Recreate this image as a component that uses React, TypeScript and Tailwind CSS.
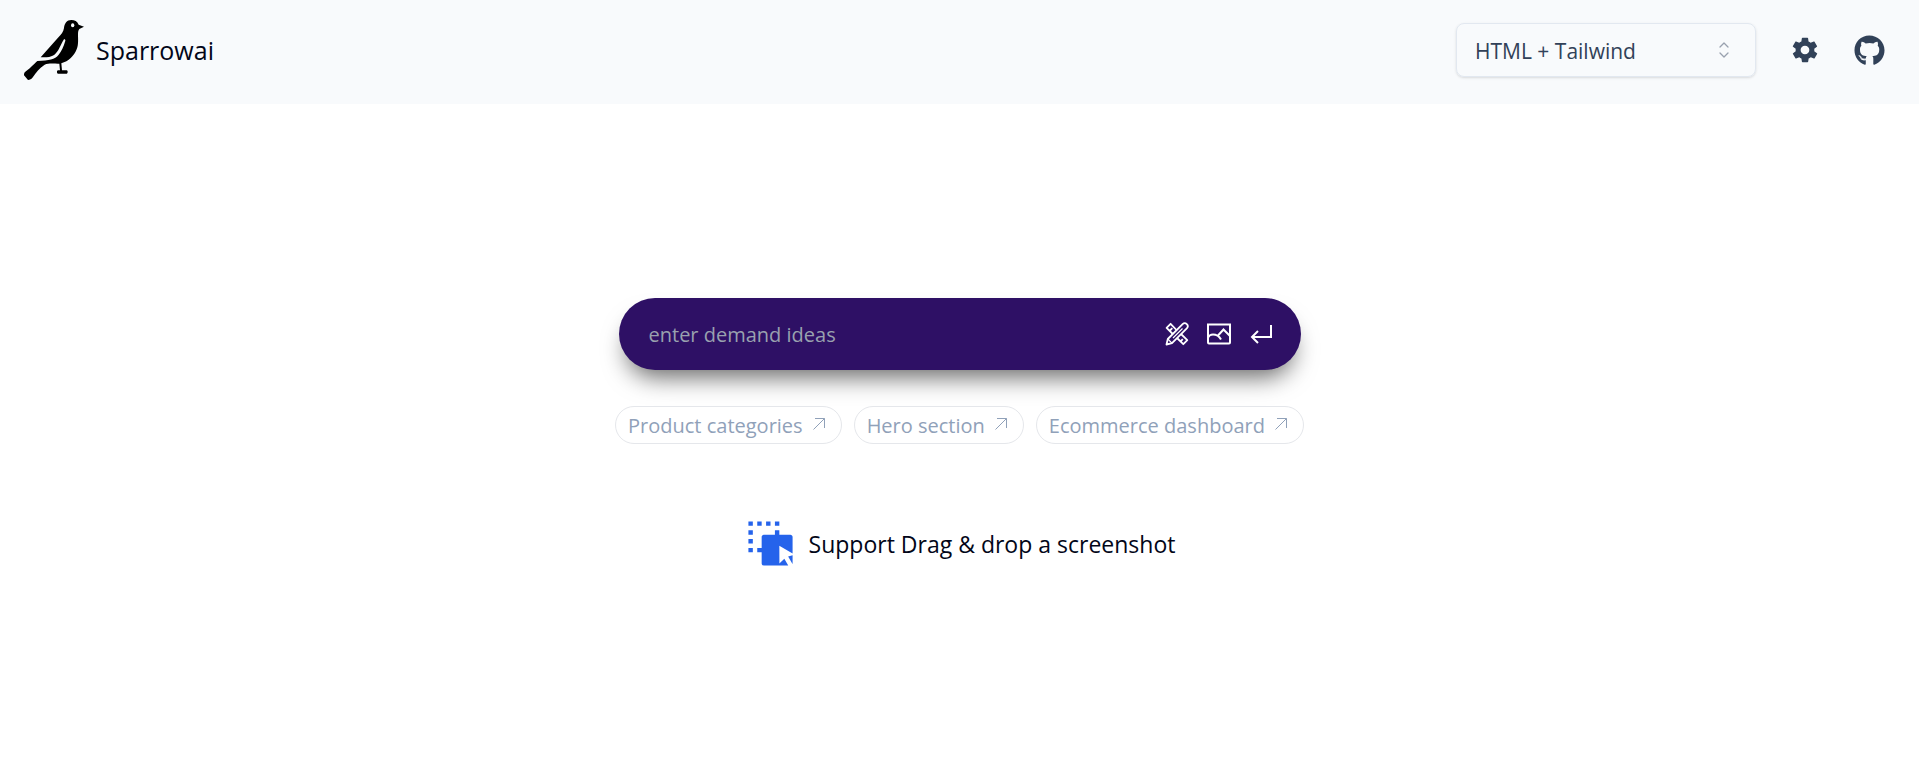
import { FaGithub } from "react-icons/fa";
import { IoMdSettings } from "react-icons/io";
import { RiDragDropFill } from "react-icons/ri";

function SparrowLogo() {
  return (
    <svg viewBox="0 0 180 180" className="size-15" aria-hidden="true">
      <path d="M142 0C128 0 122 10 120 24C118 36 112 42 104 51L50 112H68C90 110 98 100 106 84C111 74 115 66 119 59C121 56 125 58 124 62C119 80 112 94 104 104C92 119 76 121 40 123C34 128 22 142 4 155C0 158 0 162 0 166L12 180C18 180 22 178 27 171C36 158 46 144 62 134C76 128 96 132 106 131L108 151H102C98 151 98 161 102 161H128C132 161 132 151 128 151H114L112 130C134 124 150 108 158 88C164 74 162 56 162 44C162 36 163 30 166 27L180 20L164 14C160 4 152 0 142 0Z" />
      <ellipse cx="146" cy="16" rx="5" ry="6" className="fill-slate-50" />
    </svg>
  );
}

function CaretSort() {
  return (
    <svg viewBox="0 0 24 24" fill="none" stroke="currentColor" strokeWidth="1.3" strokeLinecap="round" strokeLinejoin="round" className="pointer-events-none absolute top-1/2 right-5 size-6 -translate-y-1/2 text-gray-400" aria-hidden="true">
      <path d="M8 9l4-4 4 4M8 15l4 4 4-4" />
    </svg>
  );
}

function PencilRulerIcon() {
  return (
    <svg viewBox="0 0 24 24" fill="none" stroke="currentColor" strokeWidth="1.8" strokeLinejoin="round" className="size-6" aria-hidden="true">
      <path d="M1.500 22.500L2.800 17L17.600 2.200A2.900 2.900 0 0 1 21.800 6.400L7 21.200Z" />
      <path d="M2.800 17L7 21.200M17.500 6.500L8 16" strokeWidth="1.200" />
      <path d="M11.500 8L5.600 1.800L1.600 5.800L7.800 12M16 12L22.300 18.200L18.300 22.200L12 16M5 8.500L7.300 6.200M15.500 19.500L17.800 17.200" />
    </svg>
  );
}

function ImageIcon() {
  return (
    <svg viewBox="0 0 24 24" fill="none" stroke="currentColor" strokeWidth="2" className="size-6" aria-hidden="true">
      <path d="M1 2.500H23V20.500Q23 21.500 22 21.500H2Q1 21.500 1 20.500ZM1 15.500C2.500 12.500 4 12.500 6 12.500C9 12.500 12 14 14 17.500M11 13.500L16.500 7.500L23 14" />
    </svg>
  );
}

function ReturnIcon() {
  return (
    <svg viewBox="0 0 24 24" fill="none" stroke="currentColor" strokeWidth="2" className="size-6" aria-hidden="true">
      <path d="M22 3V15H3M9 9L3 15L9 21" />
    </svg>
  );
}

function ArrowUpRight() {
  return (
    <svg viewBox="0 0 12 12" fill="none" stroke="currentColor" className="mb-1 size-3" aria-hidden="true">
      <path d="M0.500 11.500L11.500 0.500M2 0.500H11.500V10" />
    </svg>
  );
}

const ideas = ["Product categories", "Hero section", "Ecommerce dashboard"];

export default function App() {
  return (
    <div className="min-h-screen bg-white font-['Open_Sans','Noto_Sans',sans-serif] text-slate-950">
      <header className="flex h-26 items-center justify-between bg-slate-50 px-6">
        <div className="flex items-center gap-3 pb-1">
          <SparrowLogo />
          <h1 className="pt-0.5 text-[25px] font-medium">Sparrowai</h1>
        </div>
        <div className="flex items-center pr-2.5 pb-1">
          <div className="relative">
            <select aria-label="Output stack" className="h-[54px] w-[300px] appearance-none rounded-lg border border-slate-200 bg-transparent px-[18px] pt-1 text-[21px] text-slate-700 shadow-sm">
              <option>HTML + Tailwind</option>
            </select>
            <CaretSort />
          </div>
          <button aria-label="Settings" className="ml-[34px] text-slate-700">
            <IoMdSettings className="size-[30px]" />
          </button>
          <a href="#github" aria-label="GitHub" className="ml-[34px] text-slate-700">
            <FaGithub className="size-[31px]" />
          </a>
        </div>
      </header>

      <main className="flex flex-col items-center pt-[194px]">
        <form className="flex h-[72px] w-[682px] items-center rounded-full bg-[#2e1065] pr-7 pl-[30px] text-white shadow-[0_15px_25px_-8px_rgba(0,0,0,0.6)]">
          <input aria-label="Demand ideas" placeholder="enter demand ideas" className="min-w-0 flex-1 bg-transparent pt-0.5 text-xl outline-none placeholder:text-gray-400" />
          <div className="flex items-center gap-[18px]">
            <button type="button" aria-label="Draw">
              <PencilRulerIcon />
            </button>
            <button type="button" aria-label="Upload image">
              <ImageIcon />
            </button>
            <button type="submit" aria-label="Send">
              <ReturnIcon />
            </button>
          </div>
        </form>

        <div className="mt-9 flex gap-3">
          {ideas.map((idea) => (
            <button key={idea} className="flex h-[38px] items-center gap-2.5 rounded-full border border-gray-200 pt-0.5 pr-4 pl-3 text-xl text-slate-400">
              {idea}
              <ArrowUpRight />
            </button>
          ))}
        </div>

        <div className="mt-[73px] flex items-center gap-3">
          <RiDragDropFill className="size-[53px] text-[#2563eb]" />
          <p className="pt-0.5 text-[23px]">Support Drag &amp; drop a screenshot</p>
        </div>
      </main>
    </div>
  );
}
